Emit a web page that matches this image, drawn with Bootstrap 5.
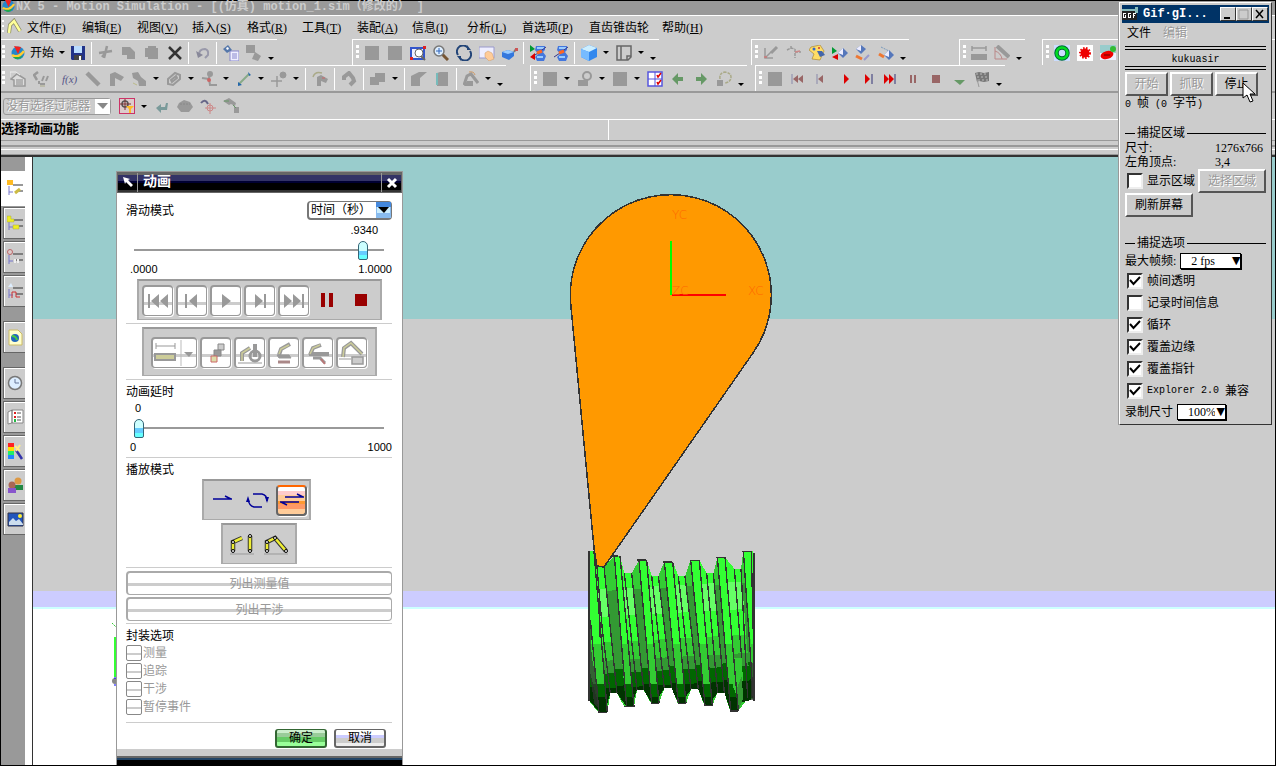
<!DOCTYPE html>
<html lang="zh-CN">
<head>
<meta charset="utf-8">
<meta name="viewport" content="width=device-width, initial-scale=1">
<title>NX 5 - Motion Simulation</title>
<link href="https://cdn.jsdelivr.net/npm/bootstrap@5.3.0/dist/css/bootstrap.min.css" rel="stylesheet">
<style>
:root{--face:#ccc;--edge:#999;--ink:#000}
body{font:12px/16px "Liberation Serif","Noto Sans CJK SC",serif;color:var(--ink);background:var(--face);overflow:hidden}
button,select,input{font:inherit;color:inherit}
svg{display:block}
.shell{border:1px solid #000;height:100vh}
.mono{font-family:"Liberation Mono","Noto Sans CJK SC",monospace}
.mono10{font:10px/16px "Liberation Mono",monospace}
.cjk{font-size:12px}
/* main window bars */
.titlebar{height:15px;background:var(--edge);border-bottom:1px solid #fff;color:var(--face);font-weight:700;white-space:pre;line-height:12px}
.titlebar svg{margin-top:-3px}
.menubar{height:23px}
.menubar a{color:#000;text-decoration:none;white-space:nowrap;width:55px;line-height:20px}
.menubar a.w3{width:67px}.menubar a.w5{width:73px}
.toolrow{height:26px}
.toolrow.last{border-bottom:2px solid var(--edge);height:28px}
.tbar{border-top:1px solid #fff;border-left:1px solid #fff}
.tbar.first{border-left:0}
.grip{width:3px;height:15px;margin:0 1px 0 3px;background:repeating-linear-gradient(#fff 0 3px,transparent 3px 5px)}
.tbar.first .grip{margin:0 1px}
.tb{border:0;background:none;padding:0;width:23px;height:22px;display:flex;align-items:center;justify-content:center;flex:none}
.tb.start{width:52px;gap:4px}
.tb svg{width:16px;height:16px;flex:none}
.tb span{white-space:nowrap}
.dd{width:12px;height:22px;border:0;background:none;padding:0;flex:none;display:flex;align-items:center;justify-content:center}
.tb.start+.dd{width:8px}
.dd::after{content:"";border:3px solid transparent;border-top-color:#000;border-bottom:0}
.dd.low{align-items:flex-end;padding-bottom:4px}
.vsep{width:1px;height:22px;background:#fff;margin:0 2px;flex:none}
.last .vsep{margin:0 2px 0 3px}
.g1{margin-left:75px}.g2{margin-left:92px}.g3{margin-left:50px}.g4{margin-left:17px}.g5{margin-left:24px}.g6{margin-left:8px}
.filterrow{height:27px;border-bottom:1px solid #fff}
.statusrow{height:21px;border-bottom:1px solid var(--edge);font-weight:700;font-size:13px}
.statusrow>div:first-child{width:47.7%;border-right:1px solid #fff;line-height:18px}
.ridge{height:16px;background:linear-gradient(var(--face) 4px,var(--edge) 4px 6px,var(--face) 6px 8px,#fff 8px 9px,var(--face) 9px 13px,var(--edge) 13px 14px,#333 14px 16px)}
.combo{position:relative;display:inline-block}
.combo select{appearance:none;width:100%;border-radius:0;padding:0 2px;outline:0;display:block}
.combo>svg,.combo>span{position:absolute;pointer-events:none}
.combo.filter{width:108px;margin-left:2px}
.combo.filter select{height:17px;border:1px solid var(--edge);border-radius:3px;background:var(--face);color:#999;line-height:15px;text-shadow:1px 1px #fff;opacity:1}
.combo.filter svg{right:1px;top:1px}
/* resource rail */
.rail{width:24px;background:var(--edge);padding-top:14px}
.rail button{width:22px;height:32px;margin:0 0 2px 2px;padding:0 0 0 3px;border:1px solid #666;border-right:0;border-radius:0;background:var(--face);box-shadow:inset 1px 1px #fff}
.rail button.on{width:25px;height:35px;margin:0 0 1px;background:#fff;border:0;padding-left:6px}
.rail .grp{margin-bottom:14px!important}
.gutter{width:7px;background:#fff}
.stage{border-left:1px solid #333;background:linear-gradient(#9cc 162px,#ccc 162px 434px,#ccf 434px 450px,#cff 450px 452px,#fff 452px);min-width:0}
.scene{position:absolute;left:527px;top:23px}
.triad{position:absolute;left:79px;top:465px}
/* animation dialog */
.anim{position:absolute;left:83px;top:14px;bottom:0;width:287px;background:#fff;border:1px solid var(--edge);border-bottom:0}
.anim-title{height:21px;border:1px solid #666;background:linear-gradient(#666 0 2px,#336 2px 8px,#003 8px 10px,#000 10px 17px,#333 17px);color:#fff;font-weight:700;font-size:14px}
.anim-title button,.anim-title i{width:20px;height:19px;border:0;border-right:1px solid #999;background:none;padding:0 3px;flex:none}
.anim-title button:last-child{border-right:0;border-left:1px solid #999}
.anim-title span{line-height:17px;padding-left:5px}
.anim-body{padding:0 10px 0 9px}
.rule{height:1px;background:#ccc}
.rule.a{margin:3px 0}.rule.b{margin:3px 0 4px}.rule.d{margin:6px 0}
.digits{font:11px/14px "Liberation Sans",sans-serif;padding:2px 0 0 4px}
.digits.val{padding:3px 14px 0 9px}
.digits.val.near{padding-top:1px}
.combo.time{width:85px;height:19px}
.combo.time select{height:19px;border:2px solid #777;border-width:1px 2px 2px;border-radius:4px;background:#fff;line-height:15px}
.combo.time svg{right:1px;top:1px}
input[type=range]{appearance:none;display:block;width:250px;height:20px;margin:3px 8px 0;background:linear-gradient(transparent 9px,#999 9px 11px,transparent 11px)}
input[type=range]::-webkit-slider-thumb{appearance:none;width:10px;height:19px;border:1px solid #367;border-radius:5px 5px 2px 2px;background:linear-gradient(#cff 0 50%,#6cf 50% 78%,#6ff 78%)}
.tray{background:var(--face);border:2px solid #aaa;border-top-color:#999;border-bottom-width:1px;margin:0 auto;height:41px;display:flex;align-items:center;gap:3px}
.tray.play{width:245px;padding-left:3px;margin-top:3px}
.tray.pack{width:235px;height:49px;padding-left:7px}
.tray.loop{width:109px;padding-left:4px;margin:1px 0 0 76px}
.tray.pose{width:76px;margin:3px 0 0 95px;gap:8px;justify-content:center}
.pad{width:31px;height:31px;padding:0;border:2px solid #999;border-width:2px 1px 1px 2px;border-radius:4px;box-shadow:1px 1px #fff;background:linear-gradient(#fff 15px,#ccc 15px 18px,#fff 18px);display:flex;align-items:center;justify-content:center;flex:none}
.pad.wide{width:46px}
.bare{border:0;background:none;padding:0;width:31px;height:31px;display:flex;align-items:center;justify-content:center}
.pad.hot{border:2px solid #666;border-top-color:#f60;background:linear-gradient(#fff 0 4px,#fcc 4px 8px,#fc9 8px 14px,#f93 14px 17px,#f96 17px 22px,#fc9 22px)}
.longbtn{display:block;width:100%;height:24px;margin-bottom:2px;padding:0;border:2px solid #aaa;border-width:2px 1px 1px 2px;border-radius:4px;background:linear-gradient(#fff 10px,#ccc 10px 13px,#fff 13px);color:#999;line-height:18px}
.opt{height:18px;color:#999}
.opt input{appearance:none;width:16px;height:16px;margin:0 1px 0 0;border:1px solid #888;border-radius:2px;background:linear-gradient(#fff 7px,#ccc 7px 9px,#fff 9px)}
.acts{gap:7px;padding-right:6px}
.dlg{width:52px;height:19px;padding:0;border:2px solid #666;border-width:1px 2px 2px;border-radius:3px;line-height:15px;background:linear-gradient(#fff 5px,#ccf 5px 8px,#ccc 8px 13px,#eee 13px)}
.dlg.ok{border-color:#363;background:linear-gradient(#cec 3px,#9c9 3px 7px,#6c6 7px 12px,#9f9 12px)}
.anim-foot{position:absolute;left:0;right:0;bottom:0;height:16px;background:linear-gradient(#ccc 7px,#666 7px 9px,#246 9px 11px,#000 11px)}
/* capture window */
.gif{position:absolute;right:4px;top:2px;width:153px;height:423px;background:var(--face);border:1px solid #fff;border-color:#fff #333 #333 #fff;box-shadow:-1px 0 #999;padding:2px;z-index:5}
.gif-title{height:18px;background:#036;color:#fff;font-weight:700;padding-right:1px}
.gif-title button{width:16px;height:14px;padding:0;background:var(--face);border:1px solid #fff;border-color:#fff #333 #333 #fff;flex:none}
.gif-in{padding:0 3px}
.gif nav{gap:12px;padding:2px 0 0 2px}
.gif a{color:#000;text-decoration:none}
.off,.gif a.off{color:#999!important;text-shadow:1px 1px #fff}
.twin{height:24px;margin:5px 0 2px;border:4px double #000;border-width:4px 0;text-align:center;line-height:16px}
.trio{gap:2px}
.b3{height:24px;padding:0;background:var(--face);border:2px solid #fff;border-color:#fff #555 #555 #fff;border-radius:0;line-height:18px}
.b3.s{width:43px}.b3.m{width:68px}
.legendrow::before,.legendrow::after{content:"";height:1px;background:#000;width:10px}
.legendrow::after{flex:1}
.legendrow{gap:2px;height:16px;margin-top:12px;display:flex;align-items:center}
.legendrow.far{margin-top:18px}
.kv{height:14px;line-height:14px}
.kv span+span{width:51px;margin-left:auto}
.ck{height:22px}
.ck input{appearance:none;width:16px;height:16px;margin:0 4px 0 2px;background:#fff;border:2px solid #000;border-color:#333 #eee #eee #333;flex:none}
.ck input:checked{background:#fff url("data:image/svg+xml,%3Csvg xmlns='http://www.w3.org/2000/svg' viewBox='0 0 12 12'%3E%3Cpath d='M1 5l3.500 4L11 2' fill='none' stroke='%23000' stroke-width='2'/%3E%3C/svg%3E")}
.pick{height:19px;gap:4px}
.combo.fps{width:61px}.combo.pct{width:49px}
.combo.fps select,.combo.pct select{height:16px;border:1px solid #000;background:#fff;box-shadow:1px 1px #000;padding:0 10px;line-height:14px}
.combo.fps span,.combo.pct span{right:1px;top:0;font:11px/16px "DejaVu Sans",sans-serif}
.pointer{position:absolute;left:122px;top:79px}
</style>
</head>
<body>
<svg width="0" height="0" class="position-absolute" aria-hidden="true">
<defs>
<g id="ball"><circle cx="8" cy="8" r="6.500" fill="#28c"/><path d="M2 10q6 4 12-4" stroke="#fc3" stroke-width="2.500" fill="none"/><path d="M4 1l7 1-3 7z" fill="#e22"/><path d="M3 12q5 5 10-1l-4 1z" fill="#2a4"/></g>
<g id="arm"><path d="M3 14l1-8 4-4 6 10" fill="none" stroke="#886" stroke-width="4"/><path d="M3 14l1-8 4-4 6 10" fill="none" stroke="#ff9" stroke-width="2.500"/></g>
<g id="save"><path d="M1 1h14v14H2l-1-1z" fill="#238"/><path d="M4 1h8v7H4z" fill="#bdf"/><path d="M4 10h8v5H4z" fill="#444"/><path d="M9 11h2v4H9z" fill="#fff"/></g>
<g id="cut" fill="none" stroke="#999" stroke-width="2.500"><path d="M9 1L6 13M1 8l13-2M4 12l5-6"/></g>
<g id="copy" fill="#999"><path d="M1 2h8l5 5v7H6v-4H1z"/></g>
<g id="paste" fill="#999"><path d="M1 3h3V1h8v2h2v11H4v-2H1z"/></g>
<g id="del"><path d="M2 2l12 12M14 2L2 14" stroke="#333" stroke-width="2.500"/></g>
<g id="undo"><path d="M4 10q0-6 6-6 4 1 3 6l-3 3" fill="none" stroke="#99a" stroke-width="2"/><path d="M1 6l2 7 5-3z" fill="#889"/></g>
<g id="doc"><path d="M7 6h9v10H7z" fill="#eef" stroke="#88c"/><path d="M9 9h5M9 11h5M9 13h5" stroke="#88c"/><path d="M0 4l5-4 4 5-5 3z" fill="#57a"/><path d="M3 3l2-1 1 2-2 1z" fill="#fff"/></g>
<g id="shapes" fill="#999"><path d="M0 0h9v8H0zM9 7l6 4-3 5-6-2z"/></g>
<g id="sq"><path d="M1 1h14v14H1z" fill="#999"/></g>
<g id="fit"><path d="M1 3h13v11H1z" fill="#eef" stroke="#35c" stroke-width="2"/><circle cx="9" cy="8" r="4" fill="#fff" stroke="#666"/><path d="M11 11l4 4" stroke="#666" stroke-width="2"/><path d="M0 12h3v3H0zM13 1h3v3h-3z" fill="#d22"/></g>
<g id="zoom"><path d="M9 9l6 6" stroke="#753" stroke-width="3"/><circle cx="6" cy="6" r="5" fill="#def" stroke="#777" stroke-width="1.500"/><path d="M3 6h6M6 3v6" stroke="#36b"/></g>
<g id="rotate" fill="none" stroke="#247" stroke-width="2"><path d="M2 10a6 6 0 0 1 10-7M14 6a6 6 0 0 1-10 7"/><path d="M11 0v5h4zM5 16v-5H1z" fill="#247" stroke="none"/></g>
<g id="pan"><path d="M0 2h15v11H0z" fill="#eef" stroke="#99c"/><path d="M6 8l3-2 4 2 2 6-5 2-4-4z" fill="#fc9" stroke="#c96" stroke-width=".5"/></g>
<g id="persp"><path d="M0 7l6-2 6 2v4l-5 4-7-3z" fill="#37d"/><path d="M0 7l6-2 6 2-6 2z" fill="#9cf"/><path d="M12 7l2-3" stroke="#777" stroke-width="2"/><path d="M13 3h3v3h-3z" fill="#c55"/></g>
<g id="robo"><path d="M5 1h9v4l-2 2 3 4-2 5H6l-2-4 3-3-3-4z" fill="#47d"/><path d="M6 3h7M6 12h6" stroke="#9cf" stroke-width="2"/><path d="M1 12l6-4 8-6" fill="none" stroke="#338" stroke-width="1"/><path d="M6 8l5-2" stroke="#f62" stroke-width="3"/></g>
<g id="robogo"><use href="#robo" x="1"/><path d="M0 0l5 4-5 3z" fill="#093"/><path d="M5 8v7l-5-3z" fill="#d00"/></g>
<g id="cube"><path d="M0 4l8-4 8 3v9l-8 4-8-4z" fill="#38e"/><path d="M0 4l8-4 8 3-8 4z" fill="#cef"/><path d="M8 7v9l-8-4V4z" fill="#7bf"/></g>
<g id="page" fill="none" stroke="#666" stroke-width="1.500"><path d="M1 1h14v11l-3 3H1zM5 1v14M15 11h-4v4"/></g>
<g id="csys" fill="none" stroke="#999" stroke-width="1.500"><path d="M2 3v10h8M2 13l6-6"/><path d="M8 8l6-6" stroke-width="3"/><path d="M1 12h3" stroke="#c77"/></g>
<g id="csys2" fill="none" stroke="#999" stroke-width="1.500"><path d="M9 4v9M9 7h6M1 5l4-2 4 1M5 1v4" stroke-dasharray="3 1"/><path d="M9 7l5-1" stroke="#c88"/></g>
<g id="palette"><path d="M2 2l9-2 4 6-4 9-8-1 2-5-5-4z" fill="#fd6" stroke="#a83" stroke-width=".7"/><path d="M8 6l5 0 3 4-5 2z" fill="#46a"/><circle cx="5" cy="4" r="1.500" fill="#36c"/><circle cx="10" cy="3" r="1" fill="#c33"/></g>
<g id="gem"><path d="M6 8l5-5 5 5-5 5z" fill="#57b"/><path d="M6 8l5-5v7z" fill="#eef"/></g>
<g id="gemgo"><use href="#gem"/><path d="M0 2l5 4-5 3z" fill="#093"/><path d="M6 9v6l-6-3z" fill="#d00"/></g>
<g id="gemup"><path d="M1 4l5-4 5 4-5 5z" fill="#57b"/><path d="M1 4l5-4v6z" fill="#eef"/><path d="M1 11l6 3" stroke="#e73" stroke-width="3"/><path d="M9 15l5-5" stroke="#99c" stroke-width="2"/></g>
<g id="gemdn"><use href="#gem" y="2"/><path d="M1 9l5 3" stroke="#e73" stroke-width="3"/><path d="M3 2l8 4" stroke="#79b" stroke-dasharray="2 1"/></g>
<g id="dist"><path d="M1 3h14M1 1v5M15 1v5" stroke="#999" fill="none" stroke-width="1.500"/><path d="M0 9h16v6H0z" fill="#999"/></g>
<g id="angle"><path d="M1 2v12h12M1 6q6 2 7 8" fill="none" stroke="#b88"/><path d="M3 1l12 11" stroke="#999" stroke-width="4"/></g>
<g id="ring"><path d="M0 0h16v16H0z" fill="#cdf"/><circle cx="8" cy="8" r="5.500" fill="none" stroke="#063" stroke-width="4.500"/><circle cx="8" cy="8" r="5.500" fill="none" stroke="#0d2" stroke-width="2.500"/></g>
<g id="gear"><path d="M0 0h16v16H0z" fill="#fff"/><circle cx="8" cy="8" r="4.500" fill="#e00"/><circle cx="8" cy="8" r="5" fill="none" stroke="#e00" stroke-width="2" stroke-dasharray="1.500 1.500"/></g>
<g id="cone"><path d="M0 0h16v8H0z" fill="#9cc"/><path d="M0 8h16v7H0z" fill="#eef"/><ellipse cx="7" cy="10" rx="6.500" ry="4" transform="rotate(-15 7 10)" fill="#e00"/><path d="M4 10h6" stroke="#600"/><circle cx="13" cy="4" r="3" fill="#3b3"/></g>
<g id="fx"><text x="0" y="12" font-size="11" font-style="italic" fill="#558">f(x)</text></g>
<g id="house"><path d="M1 8l6-5 8 5v7H4V9z" fill="#ddd" stroke="#999" stroke-width="1.500"/><path d="M6 9h7M6 11h7M6 13h7" stroke="#888"/><path d="M0 1h6l4 3M0 1v5" fill="none" stroke="#eee"/></g>
<g id="links" fill="none" stroke="#999" stroke-width="2.500"><path d="M5 1L1 4l3 5"/><path d="M7 13h5M9 10l2-5M13 10l2-5M6 10v3" stroke-width="2"/><path d="M7 15h5" stroke="#aa8" stroke-width="1"/></g>
<g id="bar"><path d="M2 2l12 12" stroke="#999" stroke-width="4.500"/></g>
<g id="elbow"><path d="M2 15V3l5-2 9 5-3 4-6-3v8z" fill="#999"/></g>
<g id="elbowdrv"><path d="M5 15V6l4-2 7 4-2 4-5-2v5z" fill="#999"/><path d="M1 6q2-6 9-4" fill="none" stroke="#aa8" stroke-width="1.500"/><path d="M10 7h3" stroke="#c66"/></g>
<g id="blob"><path d="M1 2l6-1 3 5 5 4v5H8l-1-5-5-3z" fill="#999"/><path d="M2 12l4 2" stroke="#bb8"/></g>
<g id="clip" fill="none" stroke="#999" stroke-width="2"><path d="M2 8l7-6 5 2 0 4-7 6-5-1zM5 9l5-4 1 2-5 4z"/></g>
<g id="hook" fill="none" stroke="#999" stroke-width="4"><path d="M3 9V6l5-4 4 5 1 3-4 4"/></g>
<g id="joint" fill="none" stroke="#999" stroke-width="2"><path d="M1 7l7 1 1 6h7M8 8l1-7"/><circle cx="9" cy="3" r="2" fill="#999"/><circle cx="8" cy="9" r="1" stroke="#c66"/></g>
<g id="vec"><path d="M3 13L13 3" stroke="#8a8" stroke-width="2"/><path d="M2 11l4 3-4 1zM12 1l3 3-2 1z" fill="#26a"/></g>
<g id="plus" fill="none" stroke="#999"><path d="M0 10h11M6 5v11" stroke-width="1.500"/><circle cx="12" cy="4" r="3" fill="#999"/></g>
<g id="steps" fill="#999"><path d="M0 6h5V2h10v9H9v3H0z"/></g>
<g id="flap" fill="#999"><path d="M0 5l8-4h8L9 7v8H0z"/></g>
<g id="sheet"><path d="M3 2l3-1h8v14H3z" fill="#999"/><path d="M3 2v12" stroke="#7bb" stroke-width="2"/></g>
<g id="wrench"><path d="M1 14l3-9 4-2 7 9" fill="none" stroke="#999" stroke-width="3"/><path d="M4 10h6v5H1z" fill="#999"/><path d="M6 1q5-1 6 3" fill="none" stroke="#c96"/></g>
<g id="bob" fill="none" stroke="#999" stroke-width="2"><circle cx="10" cy="5" r="4"/><path d="M2 10h8v4H2z" fill="#999"/></g>
<g id="checks"><path d="M1 1h14v14H1z" fill="#fff" stroke="#55d" stroke-width="1.500"/><path d="M8 1v14M1 8h14" stroke="#55d"/><path d="M10 4l1 2 3-4M10 11l1 2 3-4" fill="none" stroke="#d00" stroke-width="1.500"/></g>
<g id="left"><path d="M2 8l6-6v4h5v4H8v4z" fill="#696"/></g>
<g id="right"><path d="M14 8L8 2v4H3v4h5v4z" fill="#696"/></g>
<g id="loop" fill="none" stroke="#aa8" stroke-width="1.500"><path d="M4 8q-1-6 5-7 6 1 6 5 0 5-6 6" stroke-dasharray="3 1"/><path d="M1 9h6v6H1z" fill="#999" stroke="none"/></g>
<g id="first"><path d="M2 3v10" stroke="#88a"/><path d="M8 4v8L3 8zM13 4v8L8 8z" fill="#966"/></g>
<g id="prev"><path d="M4 3v10" stroke="#88a"/><path d="M10 4v8L5 8z" fill="#966"/></g>
<g id="play"><path d="M8 3v10l5-5z" fill="#d00"/></g>
<g id="next"><path d="M6 3v10l5-5z" fill="#d00"/><path d="M13 3v10" stroke="#337"/></g>
<g id="last"><path d="M2 3v10l5-5zM7 3v10l5-5z" fill="#d00"/><path d="M13 3v10" stroke="#337"/></g>
<g id="pause"><path d="M5 4h2v8H5zM9 4h2v8H9z" fill="#966"/></g>
<g id="stop"><path d="M4 4h8v8H4z" fill="#966"/></g>
<g id="down"><path d="M3 9h11l-5 5z" fill="#696"/></g>
<g id="flag"><path d="M1 2l4-1 5 1 5-1v9l-5 1-5-1-2 1z" fill="#777"/><path d="M2 3h12M3 6h11M4 9h10" stroke="#bbb" stroke-dasharray="2 2"/><path d="M3 8l2 8" stroke="#999"/></g>
<g id="target"><path d="M0 0h16v16H0z" fill="#dcc" stroke="#c36" stroke-width="2"/><circle cx="6" cy="6" r="3" fill="none" stroke="#555" stroke-width="1.500"/><path d="M1 6h11M6 1v11" stroke="#733"/><path d="M7 8h8l-3 3v4h-2v-4z" fill="#fb2"/></g>
<g id="back"><path d="M2 10l5-4v3h4l1-4h2l-1 7H7v3z" fill="#7a9a9a"/></g>
<g id="lump"><path d="M0 9l2-4 5-3 6 2 3 5-4 5H4z" fill="#999"/><path d="M3 6h10" stroke="#888" stroke-dasharray="2 1"/></g>
<g id="aim" fill="none"><path d="M1 5q4-5 7 1" stroke="#668" stroke-width="2"/><circle cx="10" cy="10" r="3" stroke="#c88"/><path d="M5 10h11M10 5v11" stroke="#c88"/></g>
<g id="hammer" fill="#999"><path d="M0 3l6-3 7 5-1 3-4-2-2 1zM11 9h5v6h-5z"/><path d="M1 3h5M10 7l3 3" stroke="#696"/></g>
<g id="tree" fill="none"><path d="M6 5h10M9 11h7" stroke="#333"/><path d="M2 6v9M2 12h4" stroke="#77c"/></g>
</defs>
</svg>

<div class="shell d-flex flex-column position-relative">
  <header class="titlebar d-flex mono"><svg width="15" height="16" viewBox="0 0 16 16"><use href="#ball"/></svg><span>NX 5 - Motion Simulation - [(仿真) motion_1.sim（修改的） ]</span></header>

  <nav class="menubar d-flex align-items-center" aria-label="菜单">
    <svg width="26" height="19" viewBox="0 0 26 19"><use href="#arm" x="5" y="1"/><path d="M1 2h2v2H1zM1 7h2v2H1zM1 12h2v2H1z" fill="#fff"/></svg>
    <a href="#">文件(<u>F</u>)</a><a href="#">编辑(<u>E</u>)</a><a href="#">视图(<u>V</u>)</a><a href="#">插入(<u>S</u>)</a><a href="#">格式(<u>R</u>)</a><a href="#">工具(<u>T</u>)</a><a href="#">装配(<u>A</u>)</a><a href="#">信息(<u>I</u>)</a><a href="#">分析(<u>L</u>)</a><a href="#" class="w3">首选项(<u>P</u>)</a><a href="#" class="w5">直齿锥齿轮</a><a href="#">帮助(<u>H</u>)</a>
  </nav>

  <div class="toolrow d-flex">
    <div class="tbar first d-flex align-items-center"><span class="grip"></span>
      <button class="tb start" aria-label="开始"><svg viewBox="0 0 16 16"><use href="#ball"/></svg><span>开始</span></button><button class="dd" aria-label="更多"></button>
      <button class="tb" aria-label="保存"><svg viewBox="0 0 16 16"><use href="#save"/></svg></button><span class="vsep"></span>
      <button class="tb" aria-label="剪切"><svg viewBox="0 0 16 16"><use href="#cut"/></svg></button><button class="tb" aria-label="复制"><svg viewBox="0 0 16 16"><use href="#copy"/></svg></button><button class="tb" aria-label="粘贴"><svg viewBox="0 0 16 16"><use href="#paste"/></svg></button><button class="tb" aria-label="删除"><svg viewBox="0 0 16 16"><use href="#del"/></svg></button><span class="vsep"></span>
      <button class="tb" aria-label="撤消"><svg viewBox="0 0 16 16"><use href="#undo"/></svg></button><span class="vsep"></span>
      <button class="tb" aria-label="属性"><svg viewBox="0 0 16 16"><use href="#doc"/></svg></button><button class="tb" aria-label="形状"><svg viewBox="0 0 16 16"><use href="#shapes"/></svg></button><button class="dd low" aria-label="更多"></button>
    </div>
    <div class="tbar g1 d-flex align-items-center"><span class="grip"></span>
      <button class="tb" aria-label="视图"><svg viewBox="0 0 16 16"><use href="#sq"/></svg></button><button class="tb" aria-label="视图"><svg viewBox="0 0 16 16"><use href="#sq"/></svg></button><button class="tb" aria-label="适合窗口"><svg viewBox="0 0 16 16"><use href="#fit"/></svg></button><button class="tb" aria-label="缩放"><svg viewBox="0 0 16 16"><use href="#zoom"/></svg></button><button class="tb" aria-label="旋转"><svg viewBox="0 0 16 16"><use href="#rotate"/></svg></button><button class="tb" aria-label="平移"><svg viewBox="0 0 16 16"><use href="#pan"/></svg></button><button class="tb" aria-label="透视"><svg viewBox="0 0 16 16"><use href="#persp"/></svg></button><span class="vsep"></span>
      <button class="tb" aria-label="运动"><svg viewBox="0 0 16 16"><use href="#robogo"/></svg></button><button class="tb" aria-label="机构"><svg viewBox="0 0 16 16"><use href="#robo"/></svg></button><span class="vsep"></span>
      <button class="tb" aria-label="着色"><svg viewBox="0 0 16 16"><use href="#cube"/></svg></button><button class="dd" aria-label="更多"></button><button class="tb" aria-label="图纸"><svg viewBox="0 0 16 16"><use href="#page"/></svg></button><button class="dd" aria-label="更多"></button><button class="dd low" aria-label="更多"></button>
    </div>
    <div class="tbar g2 d-flex align-items-center"><span class="grip"></span>
      <button class="tb" aria-label="坐标系"><svg viewBox="0 0 16 16"><use href="#csys"/></svg></button><button class="tb" aria-label="坐标系"><svg viewBox="0 0 16 16"><use href="#csys2"/></svg></button><button class="tb" aria-label="颜色"><svg viewBox="0 0 16 16"><use href="#palette"/></svg></button><button class="tb" aria-label="显示"><svg viewBox="0 0 16 16"><use href="#gemgo"/></svg></button><button class="tb" aria-label="隐藏"><svg viewBox="0 0 16 16"><use href="#gemup"/></svg></button><button class="tb" aria-label="反转"><svg viewBox="0 0 16 16"><use href="#gemdn"/></svg></button><button class="dd low" aria-label="更多"></button>
    </div>
    <div class="tbar g3 d-flex align-items-center"><span class="grip"></span>
      <button class="tb" aria-label="距离"><svg viewBox="0 0 16 16"><use href="#dist"/></svg></button><button class="tb" aria-label="角度"><svg viewBox="0 0 16 16"><use href="#angle"/></svg></button><button class="dd low" aria-label="更多"></button>
    </div>
    <div class="tbar g4 d-flex align-items-center flex-grow-1"><span class="grip"></span>
      <button class="tb" aria-label="齿圈"><svg viewBox="0 0 16 16"><use href="#ring"/></svg></button><button class="tb" aria-label="齿轮"><svg viewBox="0 0 16 16"><use href="#gear"/></svg></button><button class="tb" aria-label="锥齿轮"><svg viewBox="0 0 16 16"><use href="#cone"/></svg></button>
    </div>
  </div>

  <div class="toolrow last d-flex">
    <div class="tbar first d-flex align-items-center"><span class="grip"></span>
      <button class="tb" aria-label="环境"><svg viewBox="0 0 16 16"><use href="#house"/></svg></button><button class="tb" aria-label="连杆"><svg viewBox="0 0 16 16"><use href="#links"/></svg></button><span class="vsep"></span>
      <button class="tb" aria-label="函数"><svg viewBox="0 0 16 16"><use href="#fx"/></svg></button><button class="tb" aria-label="杆"><svg viewBox="0 0 16 16"><use href="#bar"/></svg></button><button class="tb" aria-label="弯杆"><svg viewBox="0 0 16 16"><use href="#elbow"/></svg></button><button class="tb" aria-label="块"><svg viewBox="0 0 16 16"><use href="#blob"/></svg></button><button class="dd" aria-label="更多"></button><button class="tb" aria-label="弹簧"><svg viewBox="0 0 16 16"><use href="#clip"/></svg></button><button class="dd" aria-label="更多"></button><button class="tb" aria-label="运动副"><svg viewBox="0 0 16 16"><use href="#joint"/></svg></button><button class="dd" aria-label="更多"></button><button class="tb" aria-label="矢量"><svg viewBox="0 0 16 16"><use href="#vec"/></svg></button><button class="dd" aria-label="更多"></button><button class="tb" aria-label="标记"><svg viewBox="0 0 16 16"><use href="#plus"/></svg></button><button class="dd" aria-label="更多"></button><span class="vsep"></span>
      <button class="tb" aria-label="驱动"><svg viewBox="0 0 16 16"><use href="#elbowdrv"/></svg></button><span class="vsep"></span>
      <button class="tb" aria-label="组件"><svg viewBox="0 0 16 16"><use href="#hook"/></svg></button><span class="vsep"></span>
      <button class="tb" aria-label="干涉"><svg viewBox="0 0 16 16"><use href="#steps"/></svg></button><button class="dd" aria-label="更多"></button><span class="vsep"></span>
      <button class="tb" aria-label="折弯"><svg viewBox="0 0 16 16"><use href="#flap"/></svg></button><button class="tb" aria-label="片体"><svg viewBox="0 0 16 16"><use href="#sheet"/></svg></button><span class="vsep"></span>
      <button class="tb" aria-label="编辑"><svg viewBox="0 0 16 16"><use href="#wrench"/></svg></button><button class="dd" aria-label="更多"></button><button class="dd low" aria-label="更多"></button>
    </div>
    <div class="tbar g5 d-flex align-items-center"><span class="grip"></span>
      <button class="tb" aria-label="选择"><svg viewBox="0 0 16 16"><use href="#sq"/></svg></button><button class="dd" aria-label="更多"></button><button class="tb" aria-label="摆"><svg viewBox="0 0 16 16"><use href="#bob"/></svg></button><button class="dd" aria-label="更多"></button><button class="tb" aria-label="面"><svg viewBox="0 0 16 16"><use href="#sq"/></svg></button><button class="dd" aria-label="更多"></button><button class="tb" aria-label="列表"><svg viewBox="0 0 16 16"><use href="#checks"/></svg></button><button class="tb" aria-label="后退"><svg viewBox="0 0 16 16"><use href="#left"/></svg></button><button class="tb" aria-label="前进"><svg viewBox="0 0 16 16"><use href="#right"/></svg></button><button class="tb" aria-label="循环"><svg viewBox="0 0 16 16"><use href="#loop"/></svg></button><button class="dd low" aria-label="更多"></button>
    </div>
    <div class="tbar g6 d-flex align-items-center"><span class="grip"></span>
      <button class="tb" aria-label="动画"><svg viewBox="0 0 16 16"><use href="#sq"/></svg></button><button class="tb" aria-label="首帧"><svg viewBox="0 0 16 16"><use href="#first"/></svg></button><button class="tb" aria-label="上一帧"><svg viewBox="0 0 16 16"><use href="#prev"/></svg></button><button class="tb" aria-label="播放"><svg viewBox="0 0 16 16"><use href="#play"/></svg></button><button class="tb" aria-label="下一帧"><svg viewBox="0 0 16 16"><use href="#next"/></svg></button><button class="tb" aria-label="末帧"><svg viewBox="0 0 16 16"><use href="#last"/></svg></button><button class="tb" aria-label="暂停"><svg viewBox="0 0 16 16"><use href="#pause"/></svg></button><button class="tb" aria-label="停止"><svg viewBox="0 0 16 16"><use href="#stop"/></svg></button><button class="tb" aria-label="向下"><svg viewBox="0 0 16 16"><use href="#down"/></svg></button><button class="tb" aria-label="完成"><svg viewBox="0 0 16 16"><use href="#flag"/></svg></button><button class="dd low" aria-label="更多"></button>
    </div>
  </div>

  <div class="filterrow d-flex align-items-center">
    <div class="combo filter"><select aria-label="选择过滤器" disabled><option>没有选择过滤器</option></select><svg width="15" height="15"><path d="M0 0h15v15H0z" fill="#fff"/><path d="M2 4h11l-5 6z" fill="#888"/></svg></div>
    <button class="tb ms-1" aria-label="类型过滤"><svg viewBox="0 0 16 16"><use href="#target"/></svg></button><button class="dd" aria-label="更多"></button>
    <button class="tb" aria-label="返回"><svg viewBox="0 0 16 16"><use href="#back"/></svg></button><button class="tb" aria-label="体"><svg viewBox="0 0 16 16"><use href="#lump"/></svg></button><button class="tb" aria-label="定位"><svg viewBox="0 0 16 16"><use href="#aim"/></svg></button><button class="tb" aria-label="工具"><svg viewBox="0 0 16 16"><use href="#hammer"/></svg></button>
  </div>
  <div class="statusrow d-flex"><div>选择动画功能</div><div></div></div>
  <div class="ridge"></div>

  <main class="d-flex flex-grow-1 overflow-hidden">
    <aside class="rail flex-shrink-0 d-flex flex-column">
      <button class="on" aria-label="导航"><svg width="17" height="17" viewBox="0 0 17 17"><use href="#tree"/><path d="M0 0h6v5H0z" fill="#fb2"/><path d="M8 13l5-4" stroke="#cb4" stroke-width="3"/></svg></button>
      <button aria-label="装配"><svg width="17" height="17" viewBox="0 0 17 17"><use href="#tree"/><path d="M0 1h4v3h3v3H0zM6 10h6v4H6z" fill="#ee2" stroke="#aa4" stroke-width=".5"/></svg></button>
      <button aria-label="部件"><svg width="17" height="17" viewBox="0 0 17 17"><use href="#tree"/><circle cx="3" cy="3" r="2.500" fill="#dcc" stroke="#b66"/><path d="M7 12h5" stroke="#eee" stroke-width="4" stroke-dasharray="2 1"/></svg></button>
      <button class="grp" aria-label="运动"><svg width="17" height="17" viewBox="0 0 17 17"><use href="#tree"/><path d="M1 4h5l-2-4z" fill="#def"/><path d="M5 15v-6h4v5h4" fill="none" stroke="#c33"/></svg></button>
      <button class="grp" aria-label="网络"><svg width="17" height="17" viewBox="0 0 17 17"><path d="M2 1h9l4 4v11H2z" fill="#ffc" stroke="#cb6"/><circle cx="8" cy="9" r="4" fill="#26b"/><path d="M5 7q4 0 5 4" stroke="#4c4" stroke-width="2" fill="none"/></svg></button>
      <button aria-label="历史"><svg width="17" height="17" viewBox="0 0 17 17"><circle cx="8" cy="8" r="6.500" fill="#def" stroke="#777" stroke-width="1.500"/><path d="M8 4v4h4" fill="none" stroke="#679"/></svg></button>
      <button aria-label="材料"><svg width="17" height="17" viewBox="0 0 17 17"><path d="M1 3l4-2h11v13H5l-4 1z" fill="#fff" stroke="#888"/><path d="M5 1v13M10 4h4M10 8h4M10 11h4" stroke="#555"/><path d="M7 3h2v2H7zM7 7h2v2H7z" fill="#d22"/><path d="M7 10h2v3H7z" fill="#2b4"/></svg></button>
      <button aria-label="可视化"><svg width="17" height="17" viewBox="0 0 17 17"><path d="M1 0h6v4H1z" fill="#f22"/><path d="M1 4h6v4H1z" fill="#fd0"/><path d="M1 8h6v4H1z" fill="#2e6"/><path d="M1 12h6v4H1z" fill="#28f"/><path d="M9 7l6 9" stroke="#33a" stroke-width="2.500"/><path d="M8 3l5 5M13 2l-4 6" stroke="#fe8" stroke-width="2"/></svg></button>
      <button aria-label="角色"><svg width="17" height="17" viewBox="0 0 17 17"><circle cx="11" cy="4" r="3.500" fill="#d94"/><path d="M7 8h9v5H7z" fill="#284"/><circle cx="5" cy="8" r="3.500" fill="#a65"/><path d="M1 11h8v5H1z" fill="#85c"/></svg></button>
      <button aria-label="场景"><svg width="17" height="17" viewBox="0 0 17 17"><path d="M1 2h15v13H1z" fill="#25b" stroke="#334"/><path d="M2 11l4-4 3 3 3-2 4 5v1H2z" fill="#cde"/><circle cx="13" cy="5" r="2" fill="#fe3"/></svg></button>
    </aside>
    <div class="gutter flex-shrink-0"></div>

    <section class="stage flex-grow-1 position-relative overflow-hidden">
      <svg class="triad" width="14" height="75"><path d="M0 1l4 4" stroke="#3c3" stroke-dasharray="2 1"/><path d="M3 15v40" stroke="#3f3" stroke-width="2"/><circle cx="3" cy="59" r="3" fill="#888"/><path d="M2 56h3M2 63h3" stroke="#00f"/></svg>

      <svg class="scene" width="230" height="540" viewBox="560 180 230 540" shape-rendering="crispEdges">
        <defs>
          <linearGradient id="lit" gradientUnits="userSpaceOnUse" x1="0" y1="0" x2="30" y2="550">
            <stop offset=".33" stop-color="#3f3"/><stop offset=".33" stop-color="#6f6"/><stop offset=".48" stop-color="#6f6"/><stop offset=".48" stop-color="#3f3"/><stop offset=".62" stop-color="#3f3"/><stop offset=".62" stop-color="#3c3"/><stop offset=".72" stop-color="#3c3"/><stop offset=".72" stop-color="#393"/><stop offset=".79" stop-color="#393"/><stop offset=".79" stop-color="#060"/><stop offset=".87" stop-color="#060"/><stop offset=".87" stop-color="#030"/>
          </linearGradient>
          <linearGradient id="edge" gradientUnits="userSpaceOnUse" x1="0" y1="0" x2="0" y2="550">
            <stop offset=".62" stop-color="#3f3"/><stop offset=".62" stop-color="#3c3"/><stop offset=".84" stop-color="#3c3"/><stop offset=".84" stop-color="#060"/><stop offset=".91" stop-color="#060"/><stop offset=".91" stop-color="#030"/>
          </linearGradient>
          <linearGradient id="dim" gradientUnits="userSpaceOnUse" x1="0" y1="0" x2="30" y2="550">
            <stop offset=".34" stop-color="#3c3"/><stop offset=".34" stop-color="#393"/><stop offset=".77" stop-color="#393"/><stop offset=".77" stop-color="#060"/><stop offset=".86" stop-color="#060"/><stop offset=".86" stop-color="#030"/>
          </linearGradient>
        </defs>
        <svg x="575" y="530" width="200" height="190" viewBox="0 0 600 570">
          <path d="M40 64H57L66 110H87L118 78H135L148 130H170L192 90H215L230 138H250L268 95H293L310 138H330L347 90H373L395 130H420L427 82H450L478 116H498L505 62H533L539 75V510L518 505 490 543H465L448 488H428L412 527H388L370 478H348L333 520H308L290 475H268L252 520H228L206 480H186L177 530H148L126 490H106L97 547H70L40 510Z" fill="#3c3"/>
          <g fill="url(#dim)">
            <path d="M87 110L118 78 155 530 126 490ZM170 130L192 90 230 520 206 480ZM250 138L268 95 310 520 290 475ZM330 138L347 90 390 527 370 478ZM415 130L427 82 467 543 448 488ZM498 116L505 62 535 505 518 505Z"/>
            <path d="M40 400L50 400 75 547 40 510Z"/>
          </g>
          <g fill="url(#edge)">
            <path d="M40 64H57L97 547H75L44 420ZM118 78H135L177 530H152ZM192 90H215L252 520H230ZM268 95H293L333 520H310ZM347 90H373L412 527H390ZM427 82H450L490 543H467ZM505 62H533L539 400V480Z"/>
          </g>
          <g fill="url(#lit)">
            <path d="M57 64L66 110H87L126 490H106L97 520ZM135 78L148 130H170L206 480H186L176 510ZM215 90L230 138H250L290 475H268L252 500ZM293 95L310 138H330L370 478H348L333 500ZM373 90L395 130H415L448 488H428L412 510Z"/>
            <path d="M450 82L478 116H498L518 370 528 510 490 520Z"/>
          </g>
          <path d="M470 385h30l4 65-22 40-8-20z" fill="#3c3"/><path d="M500 440l5 65-15 38-8-60z" fill="#393"/>
          <g fill="none" stroke="#333" stroke-width="4">
            <path d="M42 62V512M46 270L72 547M57 64L97 547M66 110L82 300 106 490M87 110L126 490M118 78L155 530M135 78L177 530M148 130L186 480M170 130L206 480M192 90L230 520M215 90L252 520M230 138L268 475M250 138L290 475M268 95L310 520M293 95L333 520M310 138L348 478M330 138L370 478M347 90L390 527M373 90L412 527M395 130L428 488M415 130L448 488M427 82L467 543M450 82L490 543M478 116L500 385M498 116L518 505M505 62L535 505M529 64L537 400"/>
            <path d="M74 180V320M537 70V512M70 547H97M148 530H175M228 520H252M308 520H333M388 527H412M465 543H490M112 78H128M186 90H214M264 96H292M344 92H372M422 82H448M500 64H530"/>
          </g>
          <path d="M40 260h6l4 120 18 90v60l-10-8-18-120zM528 400h11v110h-11z" fill="#333" opacity=".7"/>
        </svg>
        <path d="M571 307A100.500 100.500 0 1 1 753 353L604 567 597 566 594 548Z" fill="#f90" stroke="#333" stroke-width="1.500"/>
        <path d="M671 241V295" stroke="#0f0" stroke-width="2"/><path d="M672 295H726" stroke="#f00" stroke-width="2"/>
        <g fill="#f60" font-family="DejaVu Sans" font-size="12" font-weight="200"><text x="672" y="219">YC</text><text x="672" y="295">ZC</text><text x="748" y="295">XC</text></g>
      </svg>

      <div class="anim">
        <div class="anim-title d-flex"><i><svg width="14" height="18"><path d="M2 4l7 2-2 1 5 5-2 2-5-5-1 2z" fill="#fff"/></svg></i><span class="flex-grow-1">动画</span><button aria-label="关闭"><svg width="14" height="18"><path d="M3 5l8 8M11 5l-8 8" stroke="#fff" stroke-width="3"/></svg></button></div>
        <div class="anim-body">
          <div class="d-flex justify-content-between align-items-center pt-2"><label for="mode">滑动模式</label><div class="combo time"><select id="mode"><option>时间（秒）</option></select><svg width="15" height="16"><path d="M0 0h15v16H0z" fill="#8be"/><path d="M0 0h15v5H0z" fill="#48d"/><path d="M1 5h13v6H1z" fill="#cef"/><path d="M2 5h11l-5 6z" fill="#000"/></svg></div></div>
          <div class="digits val text-end">.9340</div>
          <input type="range" min="0" max="1" step=".001" value=".934" aria-label="时间">
          <div class="digits d-flex justify-content-between"><span>.0000</span><span>1.0000</span></div>
          <div class="tray play">
            <button class="pad" aria-label="第一步"><svg width="22" height="18"><path d="M2 2v14" stroke="#999" stroke-width="2"/><path d="M12 2v14L4 9zM21 2v14l-8-7z" fill="#999"/></svg></button>
            <button class="pad" aria-label="上一步"><svg width="18" height="18"><path d="M3 2v14" stroke="#999" stroke-width="2"/><path d="M14 2v14L6 9z" fill="#999"/></svg></button>
            <button class="pad" aria-label="播放"><svg width="18" height="18"><path d="M5 2v14l9-7z" fill="#999"/></svg></button>
            <button class="pad" aria-label="下一步"><svg width="18" height="18"><path d="M4 2v14l8-7z" fill="#999"/><path d="M14 2v14" stroke="#999" stroke-width="2"/></svg></button>
            <button class="pad" aria-label="最后一步"><svg width="22" height="18"><path d="M1 2v14l8-7zM10 2v14l8-7z" fill="#999"/><path d="M20 2v14" stroke="#999" stroke-width="2"/></svg></button>
            <button class="bare" aria-label="暂停"><svg width="14" height="14"><path d="M1 0h4v14H1zM9 0h4v14H9z" fill="#900"/></svg></button>
            <button class="bare" aria-label="停止"><svg width="12" height="12"><path d="M0 0h12v12H0z" fill="#900"/></svg></button>
          </div>
          <div class="rule a"></div>
          <div class="tray pack">
            <button class="pad wide" aria-label="测量"><svg width="42" height="26"><path d="M3 6h19M3 3v6M22 3v6" stroke="#999" fill="none"/><path d="M2 14h20v6H2z" fill="#cc9" stroke="#999" stroke-width="2"/><path d="M28 0v26" stroke="#bbb"/><path d="M31 12h9l-4 5z" fill="#999"/></svg></button>
            <button class="pad" aria-label="追踪"><svg width="24" height="24"><g stroke="#888"><path d="M14 3h6v6h-6z" fill="#ccc"/><path d="M10 9h7v6h-7z" fill="#999"/><path d="M7 15h6v6H7z" fill="#dda" stroke="#c66"/></g></svg></button>
            <button class="pad" aria-label="装配"><svg width="26" height="26" fill="none" stroke="#999"><path d="M5 21v-8l8-5" stroke-width="4"/><path d="M5 21v-8l8-5" stroke="#cc9" stroke-width="1.500"/><circle cx="18" cy="16" r="5" stroke-width="3"/><path d="M18 4v13" stroke-width="4"/><path d="M1 23h24"/></svg></button>
            <button class="pad" aria-label="干涉"><svg width="24" height="26" fill="none" stroke="#999"><path d="M7 15l2-6 9-5" stroke-width="4"/><path d="M7 14l2-5 8-4" stroke="#cc9" stroke-width="1.500"/><path d="M5 15h12l2 3H7z" fill="#999"/><path d="M6 22h12" stroke="#a88" stroke-width="3"/></svg></button>
            <button class="pad" aria-label="轨迹"><svg width="26" height="26" fill="none" stroke="#999"><path d="M5 15l3-7 8-3M4 14h20" stroke-width="4"/><path d="M5 14l3-6 7-3" stroke="#cc9" stroke-width="1.500"/><path d="M8 18h7l5 5" stroke-width="3"/><path d="M16 19l4 5" stroke="#b77" stroke-width="2"/></svg></button>
            <button class="pad" aria-label="传递"><svg width="28" height="28" fill="none" stroke="#999"><path d="M5 18l1-9 7-5 11 11" stroke-width="4"/><path d="M5 18l1-9 7-5 11 11" stroke="#cc9" stroke-width="1.500"/><path d="M14 18h11v7H14z" fill="#ccc" stroke-width="1.500"/><path d="M1 20h12"/></svg></button>
          </div>
          <div class="rule b"></div>
          <label for="delay" class="d-block">动画延时</label>
          <div class="digits val near">0</div>
          <input type="range" id="delay" min="0" max="1000" value="0">
          <div class="digits d-flex justify-content-between"><span>0</span><span>1000</span></div>
          <div class="rule b"></div>
          <div>播放模式</div>
          <div class="tray loop">
            <button class="bare" aria-label="播放一次"><svg width="22" height="12"><path d="M0 5h19M12 2l6 3" stroke="#009" stroke-width="1.500" fill="none"/></svg></button>
            <button class="bare" aria-label="循环播放"><svg width="26" height="18" fill="none" stroke="#009" stroke-width="1.500"><path d="M8 3h9q5 1 5 7M17 16H9q-5-1-6-8"/><path d="M22 12l-2-6h4zM3 5l-2 6h4z" fill="#009" stroke="none"/></svg></button>
            <button class="pad hot" aria-label="返回"><svg width="26" height="14"><path d="M6 4h19M18 1l6 3M20 9H1M8 12L2 9" stroke="#009" stroke-width="1.500" fill="none"/></svg></button>
          </div>
          <div class="tray pose">
            <button class="bare w-auto" aria-label="设计位置"><svg width="26" height="24" fill="none"><path d="M4 19v-9l9-4M21 4v15" stroke="#333" stroke-width="4.500"/><path d="M4 19v-9l9-4M21 4v15" stroke="#ee3" stroke-width="2.500"/><path d="M1 22h24" stroke="#999"/><g fill="#fff" stroke="#000"><circle cx="4" cy="19" r="1.500"/><circle cx="4" cy="10" r="1.500"/><circle cx="21" cy="4" r="1.500"/><circle cx="21" cy="19" r="1.500"/></g></svg></button>
            <button class="bare w-auto" aria-label="装配位置"><svg width="26" height="24" fill="none"><path d="M4 19v-9l8-4 11 13" stroke="#333" stroke-width="4.500"/><path d="M4 19v-9l8-4 11 13" stroke="#ee3" stroke-width="2.500"/><path d="M1 22h24" stroke="#999"/><g fill="#fff" stroke="#000"><circle cx="4" cy="19" r="1.500"/><circle cx="4" cy="10" r="1.500"/><circle cx="12" cy="6" r="1.500"/><circle cx="23" cy="19" r="1.500"/></g></svg></button>
          </div>
          <div class="rule a"></div>
          <button class="longbtn">列出测量值</button>
          <button class="longbtn">列出干涉</button>
          <div class="rule b mt-0"></div>
          <div>封装选项</div>
          <label class="opt d-flex align-items-center"><input type="checkbox">测量</label>
          <label class="opt d-flex align-items-center"><input type="checkbox">追踪</label>
          <label class="opt d-flex align-items-center"><input type="checkbox">干涉</label>
          <label class="opt d-flex align-items-center"><input type="checkbox">暂停事件</label>
          <div class="rule d"></div>
          <div class="acts d-flex justify-content-end"><button class="dlg ok">确定</button><button class="dlg">取消</button></div>
        </div>
        <div class="anim-foot"></div>
      </div>
    </section>
  </main>

</div>

<div class="gif">
  <div class="gif-title d-flex align-items-center"><svg width="17" height="16"><path d="M0 5h15v9H0z" fill="#222"/><path d="M0 3h16v2H0zM13 1h3v6h-3z" fill="#8bb"/><g fill="#fff"><path d="M1 7h3v1H2v3h1V9h1v3H1zM6 7h3v1H7v3h1V9h1v3H6zM11 7h3v1h-2v1h1v1h-1v2h-1z"/></g></svg><span class="mono flex-grow-1 ps-1">Gif·gI...</span><button aria-label="最小化"><svg width="12" height="12"><path d="M3 9h6v2H3z"/></svg></button><button aria-label="最大化"><svg width="12" height="12"><path d="M2 2h9v9H2z" fill="none" stroke="#999"/></svg></button><button aria-label="关闭"><svg width="13" height="12"><path d="M3 2l7 8M10 2l-7 8" stroke="#000" stroke-width="1.500"/></svg></button></div>
  <div class="gif-in">
    <nav class="d-flex"><a href="#">文件</a><a href="#" class="off">编辑</a></nav>
    <div class="twin"><span class="mono10">kukuasir</span></div>
    <div class="trio d-flex"><button class="b3 s off" disabled>开始</button><button class="b3 s off" disabled>抓取</button><button class="b3 s">停止</button></div>
    <div class="mono10">0 <span class="cjk">帧</span> (0 <span class="cjk">字节</span>)</div>
    <div class="legendrow">捕捉区域</div>
    <div class="kv d-flex"><span>尺寸:</span><span>1276x766</span></div>
    <div class="kv d-flex"><span>左角顶点:</span><span>3,4</span></div>
    <div class="d-flex align-items-center"><label class="ck d-flex align-items-center flex-grow-1 text-nowrap"><input type="checkbox">显示区域</label><button class="b3 m off" disabled>选择区域</button></div>
    <button class="b3 m d-block">刷新屏幕</button>
    <div class="legendrow far">捕捉选项</div>
    <div class="pick d-flex align-items-center"><label for="fps">最大帧频:</label><div class="combo fps"><select id="fps"><option>2 fps</option></select><span>▼</span></div></div>
    <label class="ck d-flex align-items-center"><input type="checkbox" checked>帧间透明</label>
    <label class="ck d-flex align-items-center"><input type="checkbox">记录时间信息</label>
    <label class="ck d-flex align-items-center"><input type="checkbox" checked>循环</label>
    <label class="ck d-flex align-items-center"><input type="checkbox" checked>覆盖边缘</label>
    <label class="ck d-flex align-items-center"><input type="checkbox" checked>覆盖指针</label>
    <label class="ck d-flex align-items-center text-nowrap"><input type="checkbox" checked><span class="mono10">Explorer 2.0</span>&nbsp;&nbsp;兼容</label>
    <div class="pick d-flex align-items-center"><label for="pct">录制尺寸</label><div class="combo pct"><select id="pct"><option>100%</option></select><span>▼</span></div></div>
  </div>
  <svg class="pointer" width="14" height="22"><path d="M1 1v15l4-3 3 7 3-1-3-7h5z" fill="#fff" stroke="#000"/></svg>
</div>
<script src="https://cdn.jsdelivr.net/npm/bootstrap@5.3.0/dist/js/bootstrap.bundle.min.js"></script>
</body>
</html>
